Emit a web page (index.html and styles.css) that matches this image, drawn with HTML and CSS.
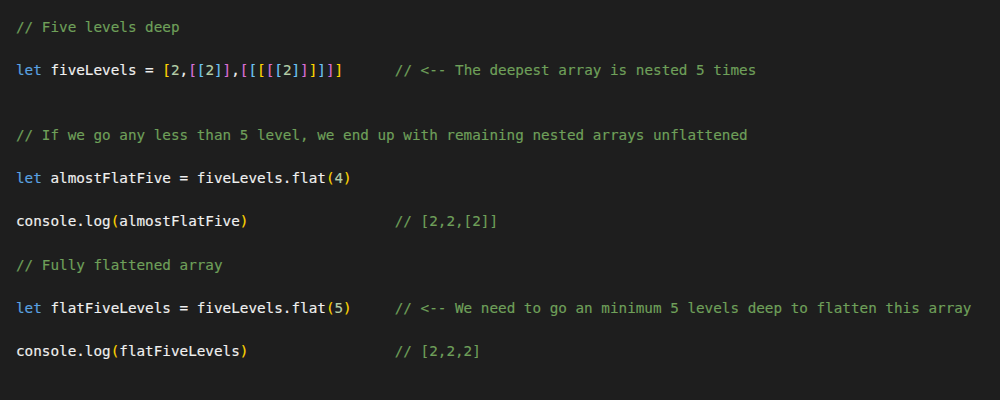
FILE: index.html
```html
<!DOCTYPE html>
<html>
<head>
<meta charset="utf-8">
<link rel="stylesheet" href="styles.css">
</head>
<body>
<pre class="code"><span class="c">// Five levels deep</span>

<span class="k">let</span> fiveLevels = <span class="b1">[</span><span class="n">2</span>,<span class="b2">[</span><span class="b3">[</span><span class="n">2</span><span class="b3">]</span><span class="b2">]</span>,<span class="b2">[</span><span class="b3">[</span><span class="b1">[</span><span class="b2">[</span><span class="b3">[</span><span class="n">2</span><span class="b3">]</span><span class="b2">]</span><span class="b1">]</span><span class="b3">]</span><span class="b2">]</span><span class="b1">]</span>      <span class="c">// &lt;-- The deepest array is nested 5 times</span>


<span class="c">// If we go any less than 5 level, we end up with remaining nested arrays unflattened</span>

<span class="k">let</span> almostFlatFive = fiveLevels.flat<span class="b1">(</span><span class="n">4</span><span class="b1">)</span>

console.log<span class="b1">(</span>almostFlatFive<span class="b1">)</span>                 <span class="c">// [2,2,[2]]</span>

<span class="c">// Fully flattened array</span>

<span class="k">let</span> flatFiveLevels = fiveLevels.flat<span class="b1">(</span><span class="n">5</span><span class="b1">)</span>     <span class="c">// &lt;-- We need to go an minimum 5 levels deep to flatten this array</span>

console.log<span class="b1">(</span>flatFiveLevels<span class="b1">)</span>                 <span class="c">// [2,2,2]</span></pre>
</body>
</html>
```

FILE: styles.css
```css
html, body {
  margin: 0;
  padding: 0;
  background: #1e1e1e;
  width: 1000px;
  height: 400px;
  overflow: hidden;
}
.code {
  margin: 0;
  padding: 17px 0 0 16px;
  font-family: "DejaVu Sans Mono", "Liberation Mono", monospace;
  font-size: 14.3px;
  line-height: 21.6px;
  color: #f0f0f0;
  white-space: pre;
  -webkit-text-stroke: 0.15px currentColor;
}
.c { color: #6fa05a; }
.k { color: #5aa2e0; }
.n { color: #b5cea8; }
.b1 { color: #ffd700; }
.b2 { color: #da70d6; }
.b3 { color: #6cc4f5; }
```
